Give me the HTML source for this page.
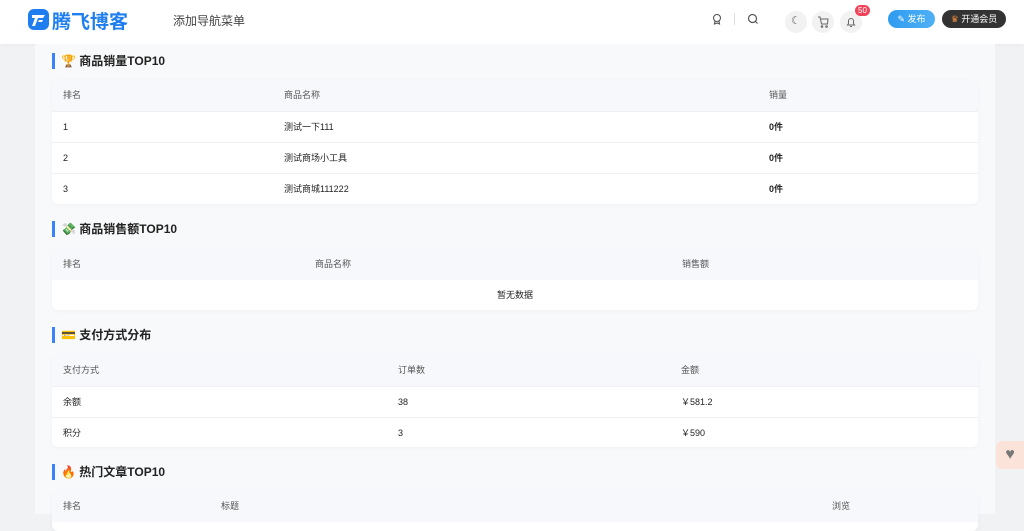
<!DOCTYPE html>
<html><head><meta charset="utf-8"><style>
*{box-sizing:border-box;margin:0;padding:0}
body{width:1024px;height:505px;overflow:hidden;background:#f1f2f4;font-family:"Liberation Sans","Noto Sans CJK SC",sans-serif;color:#222;position:relative}
.hdr{position:absolute;left:0;top:0;width:1024px;height:44px;background:#fff;box-shadow:0 1px 4px rgba(0,0,0,.04)}
.wrap{position:absolute;left:35px;top:44px;width:960px;height:470px;background:#f8f9fb}
.t{position:absolute;left:52px;font-size:12px;font-weight:bold;border-left:3px solid #3b82f6;padding-left:6px;height:16px;line-height:16px}
.card{position:absolute;left:52px;width:926px;background:#fff;border-radius:6px;box-shadow:0 1px 4px rgba(0,0,0,.04);overflow:hidden;font-size:9px}
.row{position:relative;height:31px;border-top:1px solid #f0f0f2}
.row.h{background:#f7f8fb;color:#555;border-top:none}
.row span{position:absolute;top:0;line-height:31px}
b{font-weight:bold}
.ic{position:absolute;top:11px;width:22px;height:22px;border-radius:50%;background:#f2f2f3}
</style></head><body>
<div class="hdr">
 <svg style="position:absolute;left:28px;top:9px" width="21" height="21" viewBox="0 0 21 21"><rect width="21" height="21" rx="6" fill="#1e7ef0"/><path d="M4 6h13l-2 3H10l-3 8H4l3-8H4z" fill="#fff"/><path d="M11 11h4l-1 2h-4z" fill="#fff"/></svg>
 <div style="position:absolute;left:52px;top:7px;font-size:19px;font-weight:bold;color:#1e7ef0;letter-spacing:0px">腾飞博客</div>
 <div style="position:absolute;left:173px;top:12px;font-size:12px;color:#444">添加导航菜单</div>
 <svg style="position:absolute;left:711px;top:13px" width="12" height="12" viewBox="0 0 12 12" fill="none" stroke="#555" stroke-width="1.1"><circle cx="6" cy="5" r="3.5"/><path d="M4 8l-.5 3 2.5-1 2.5 1L8 8"/></svg>
 <div style="position:absolute;left:734px;top:13px;width:1px;height:12px;background:#ddd"></div>
 <svg style="position:absolute;left:747px;top:13px" width="12" height="12" viewBox="0 0 12 12" fill="none" stroke="#555" stroke-width="1.2"><circle cx="5.5" cy="5.5" r="4"/><path d="M8.5 8.5l2 2"/></svg>
 <div class="ic" style="left:785px"></div><div style="position:absolute;left:791px;top:14px;font-size:11px;color:#666">☾</div>
 <div class="ic" style="left:812px"></div>
 <svg style="position:absolute;left:817px;top:16px" width="12" height="12" viewBox="0 0 12 12" fill="none" stroke="#666" stroke-width="1"><path d="M1 1h2l1.5 7h6L11 3H4"/><circle cx="5" cy="10.5" r=".8"/><circle cx="9.5" cy="10.5" r=".8"/></svg>
 <div class="ic" style="left:840px"></div>
 <svg style="position:absolute;left:845px;top:16px" width="12" height="12" viewBox="0 0 12 12" fill="none" stroke="#666" stroke-width="1"><path d="M2.5 9h7L8.5 7.5V5a2.5 2.5 0 0 0-5 0v2.5z"/><path d="M5 10.5h2"/></svg>
 <div style="position:absolute;left:855px;top:5px;height:11px;padding:0 3px;border-radius:6px;background:#f0445a;color:#fff;font-size:8px;line-height:11px">50</div>
 <div style="position:absolute;left:888px;top:10px;width:47px;height:18px;border-radius:9px;background:linear-gradient(90deg,#2f9bf0,#4fb0f5);color:#fff;font-size:9px;line-height:18px;text-align:center">✎ 发布</div>
 <div style="position:absolute;left:942px;top:10px;width:64px;height:18px;border-radius:9px;background:#333;color:#fff;font-size:9px;line-height:18px;text-align:center"><span style="color:#f08a3c">♛</span> 开通会员</div>
</div>
<div class="wrap"></div>
<div class="t" style="top:53px">🏆 商品销量TOP10</div>
<div class="card" style="top:80px;height:124px">
 <div class="row h"><span style="left:11px">排名</span><span style="left:232px">商品名称</span><span style="left:717px">销量</span></div>
 <div class="row"><span style="left:11px">1</span><span style="left:232px">测试一下111</span><span style="left:717px"><b>0件</b></span></div>
 <div class="row"><span style="left:11px">2</span><span style="left:232px">测试商场小工具</span><span style="left:717px"><b>0件</b></span></div>
 <div class="row"><span style="left:11px">3</span><span style="left:232px">测试商城111222</span><span style="left:717px"><b>0件</b></span></div>
</div>
<div class="t" style="top:221px">💸 商品销售额TOP10</div>
<div class="card" style="top:249px;height:61px">
 <div class="row h"><span style="left:11px">排名</span><span style="left:263px">商品名称</span><span style="left:630px">销售额</span></div>
 <div class="row" style="border:none"><span style="left:0;width:926px;text-align:center">暂无数据</span></div>
</div>
<div class="t" style="top:327px">💳 支付方式分布</div>
<div class="card" style="top:355px;height:92px">
 <div class="row h"><span style="left:11px">支付方式</span><span style="left:346px">订单数</span><span style="left:629px">金额</span></div>
 <div class="row"><span style="left:11px">余额</span><span style="left:346px">38</span><span style="left:629px">￥581.2</span></div>
 <div class="row"><span style="left:11px">积分</span><span style="left:346px">3</span><span style="left:629px">￥590</span></div>
</div>
<div class="t" style="top:464px">🔥 热门文章TOP10</div>
<div class="card" style="top:491px;height:40px">
 <div class="row h"><span style="left:11px">排名</span><span style="left:169px">标题</span><span style="left:780px">浏览</span></div>
</div>
<div style="position:absolute;left:996px;top:441px;width:28px;height:28px;border-radius:6px 0 0 6px;background:#fbe3d9;color:#777;font-size:16px;line-height:28px;text-align:center">♥</div>
</body></html>
